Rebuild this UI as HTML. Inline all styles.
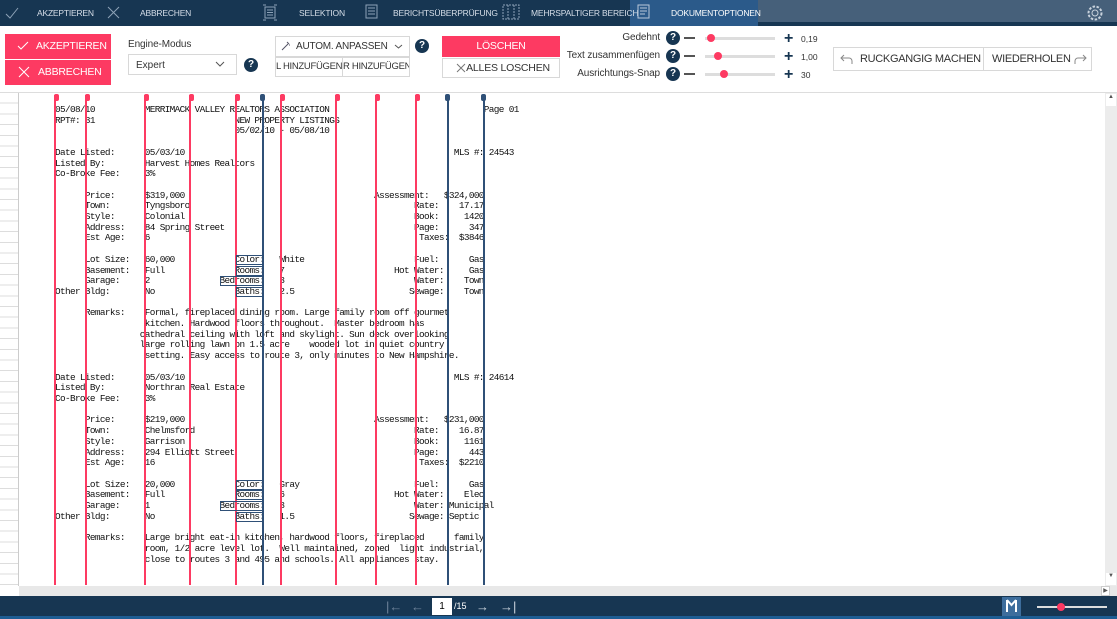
<!DOCTYPE html>
<html><head><meta charset="utf-8">
<style>
*{box-sizing:border-box;margin:0;padding:0}
body{width:1117px;height:619px;overflow:hidden;background:#fff;font-family:"Liberation Sans",sans-serif;position:relative}
div{white-space:nowrap}
.abs{position:absolute}
#top{left:0;top:0;width:1117px;height:26px;background:#173652}
.tt{position:absolute;top:0;height:26px;line-height:26px;color:#d6dee8;font-size:8.5px;letter-spacing:-0.2px}
.btn{position:absolute;font-size:10.5px;text-align:center;letter-spacing:-0.2px}
.pink{background:#fd3a62;color:#fff}
.outl{border:1px solid #d8d8d8;background:#fff;color:#333}
.q{position:absolute;width:14px;height:14px;border-radius:50%;background:#173652;color:#fff;font-size:10px;font-weight:bold;text-align:center;line-height:14px}
.lbl{position:absolute;font-size:10px;color:#333;text-align:right;letter-spacing:-0.1px}
.track{position:absolute;height:3px;background:#ddd;width:70px}
.dot{position:absolute;width:8px;height:8px;border-radius:50%;background:#fd3a62}
pre{position:absolute;left:55px;top:105px;font-family:"Liberation Mono",monospace;font-size:9.4px;letter-spacing:-0.64px;line-height:10.7px;color:#111}
.rl{position:absolute;top:95px;width:2px;height:490px;background:#fd3a62}
.bl{position:absolute;top:95px;width:2px;height:490px;background:#2f5077}
.mk{position:absolute;top:94px;width:5px;height:7px;border-radius:2px}
.bx{position:absolute;height:10px;border:1.5px solid #2f5077}
</style></head><body>
<div id="top" class="abs"></div>
<div class="abs" style="left:758px;top:0;width:359px;height:22px;background:#46607a"></div>
<div class="abs" style="left:630px;top:0;width:128px;height:26px;background:#2b5a8a"></div>
<svg class="abs" style="left:5px;top:6px" width="14" height="14"><path d="M1 8l4 4 8-10" stroke="#8ea3b8" fill="none" stroke-width="1"/></svg>
<div class="tt" style="left:37px">AKZEPTIEREN</div>
<svg class="abs" style="left:107px;top:6px" width="13" height="13"><path d="M1 1l11 11M12 1L1 12" stroke="#8ea3b8" stroke-width="1"/></svg>
<div class="tt" style="left:140px">ABBRECHEN</div>
<svg class="abs" style="left:262px;top:4px" width="16" height="17"><rect x="3" y="3" width="10" height="11" fill="none" stroke="#8ea3b8"/><path d="M5 6h6M5 8.5h6M5 11h6M1 1h3M12 1h3M1 16h3M12 16h3" stroke="#8ea3b8"/></svg>
<div class="tt" style="left:299px">SELEKTION</div>
<svg class="abs" style="left:365px;top:4px" width="16" height="17"><rect x="1" y="1" width="11" height="13" fill="none" stroke="#8ea3b8"/><path d="M3 4h7M3 7h7M3 10h7" stroke="#8ea3b8"/></svg>
<div class="tt" style="left:393px">BERICHTSÜBERPRÜFUNG</div>
<svg class="abs" style="left:502px;top:4px" width="18" height="17"><rect x="1" y="1" width="16" height="14" fill="none" stroke="#8ea3b8" stroke-dasharray="2 1"/><path d="M6 1v14M12 1v14" stroke="#8ea3b8" stroke-dasharray="2 1"/></svg>
<div class="tt" style="left:531px">MEHRSPALTIGER BEREICH</div>
<svg class="abs" style="left:637px;top:4px" width="16" height="17"><rect x="1" y="1" width="11" height="13" fill="none" stroke="#b8c8da"/><path d="M3 4h7M3 7h7M3 10h5" stroke="#b8c8da"/></svg>
<div class="tt" style="left:671px;color:#fff">DOKUMENTOPTIONEN</div>
<svg class="abs" style="left:1086px;top:4px" width="18" height="18"><circle cx="9" cy="9" r="3" fill="none" stroke="#c8d2dc"/><circle cx="9" cy="9" r="6.5" fill="none" stroke="#c8d2dc" stroke-dasharray="2.5 1.5" stroke-width="2"/></svg>

<div class="abs pink" style="left:5px;top:34px;width:106px;height:25px"></div>
<div class="abs" style="left:36px;top:34px;line-height:25px;font-size:10.5px;color:#fff;letter-spacing:-0.2px">AKZEPTIEREN</div>
<svg class="abs" style="left:17px;top:41px" width="12" height="10"><path d="M1 5l3 3 7-7" stroke="#fff" fill="none"/></svg>
<div class="abs pink" style="left:5px;top:60px;width:106px;height:25px"></div>
<div class="abs" style="left:38px;top:60px;line-height:25px;font-size:10.5px;color:#fff;letter-spacing:-0.2px">ABBRECHEN</div>
<svg class="abs" style="left:18px;top:66px" width="12" height="12"><path d="M1 1l10 10M11 1L1 11" stroke="#fff"/></svg>
<div class="lbl" style="left:128px;top:39px;text-align:left">Engine-Modus</div>
<div class="abs outl" style="left:128px;top:54px;width:109px;height:21px;font-size:10px;padding:5px 7px">Expert</div>
<svg class="abs" style="left:215px;top:61px" width="10" height="6"><path d="M1 1l4 4 4-4" stroke="#555" fill="none"/></svg>
<div class="q" style="left:244px;top:58px">?</div>
<div class="abs outl" style="left:275px;top:36px;width:135px;height:21px;font-size:10px;padding:4px 0 0 20px;letter-spacing:-0.2px">AUTOM. ANPASSEN</div>
<svg class="abs" style="left:281px;top:41px" width="10" height="10"><path d="M1 9l7-7M6 1l1 1M8 4l1 0" stroke="#556" /></svg>
<svg class="abs" style="left:394px;top:44px" width="9" height="5"><path d="M1 1l3.5 3 3.5-3" stroke="#555" fill="none"/></svg>
<div class="q" style="left:415px;top:39px">?</div>
<div class="abs outl" style="left:275px;top:57px;width:68px;height:20px;font-size:9.5px;line-height:18px;text-align:left;overflow:hidden;letter-spacing:-0.3px">L HINZUFÜGEN</div>
<div class="abs outl" style="left:342px;top:57px;width:68px;height:20px;font-size:9.5px;line-height:18px;text-align:left;overflow:hidden;letter-spacing:-0.3px">R HINZUFÜGEN</div>
<div class="btn pink" style="left:442px;top:36px;width:118px;height:21px;line-height:21px">LÖSCHEN</div>
<div class="btn outl" style="left:442px;top:58px;width:118px;height:20px;line-height:18px;padding-left:14px">ALLES LOSCHEN</div>
<svg class="abs" style="left:456px;top:63px" width="10" height="10"><path d="M1 1l8 8M9 1L1 9" stroke="#777"/></svg>

<div class="lbl" style="left:560px;top:32px;width:100px">Gedehnt</div>
<div class="lbl" style="left:540px;top:50px;width:120px">Text zusammenfügen</div>
<div class="lbl" style="left:540px;top:68px;width:120px">Ausrichtungs-Snap</div>
<div class="q" style="left:666px;top:31px">?</div>
<div class="q" style="left:666px;top:49px">?</div>
<div class="q" style="left:666px;top:67px">?</div>
<div class="abs" style="left:684px;top:37px;width:11px;height:1.5px;background:#555"></div>
<div class="abs" style="left:684px;top:55px;width:11px;height:1.5px;background:#555"></div>
<div class="abs" style="left:684px;top:73px;width:11px;height:1.5px;background:#555"></div>
<div class="track" style="left:705px;top:37px"></div><div class="dot" style="left:707px;top:34px"></div>
<div class="track" style="left:705px;top:55px"></div><div class="dot" style="left:714px;top:52px"></div>
<div class="track" style="left:705px;top:73px"></div><div class="dot" style="left:720px;top:70px"></div>
<div class="abs" style="left:784px;top:32px;font-size:16px;color:#173652;font-weight:bold;line-height:14px">+</div>
<div class="abs" style="left:784px;top:50px;font-size:16px;color:#173652;font-weight:bold;line-height:14px">+</div>
<div class="abs" style="left:784px;top:68px;font-size:16px;color:#173652;font-weight:bold;line-height:14px">+</div>
<div class="abs" style="left:801px;top:34px;font-size:8.5px;color:#333">0,19</div>
<div class="abs" style="left:801px;top:52px;font-size:8.5px;color:#333">1,00</div>
<div class="abs" style="left:801px;top:70px;font-size:8.5px;color:#333">30</div>
<div class="abs outl" style="left:833px;top:47px;width:151px;height:24px;font-size:11px;line-height:22px;padding-left:26px;letter-spacing:-0.3px">RUCKGANGIG MACHEN</div>
<div class="abs outl" style="left:983px;top:47px;width:109px;height:24px;font-size:11px;line-height:22px;padding-left:8px;letter-spacing:-0.3px">WIEDERHOLEN</div>
<svg class="abs" style="left:840px;top:53px" width="14" height="12"><path d="M4 2L1 5l3 3M1 5h8a3 3 0 0 1 3 3v3" stroke="#888" fill="none"/></svg>
<svg class="abs" style="left:1073px;top:53px" width="14" height="12"><path d="M10 2l3 3-3 3M13 5H5a3 3 0 0 0-3 3v3" stroke="#888" fill="none"/></svg>

<div class="abs" style="left:0;top:92px;width:1117px;height:1px;background:#ddd"></div>
<div class="abs" style="left:0;top:93px;width:18px;height:493px;background:repeating-linear-gradient(#fff 0,#fff 9.7px,#ddd 9.7px,#ddd 10.7px)"></div>
<div class="abs" style="left:18px;top:93px;width:1px;height:493px;background:#ccc"></div>
<div class="abs" style="left:1105px;top:93px;width:12px;height:493px;background:#ececec"></div>
<div class="abs" style="left:1106px;top:94px;width:10px;height:12px;background:#fff;font-size:6px;text-align:center;color:#555">▲</div>
<div class="abs" style="left:1106px;top:573px;width:10px;height:12px;background:#fff;font-size:6px;text-align:center;color:#555">▼</div>
<div class="abs" style="left:19px;top:586px;width:1098px;height:10px;background:#e8e8e8"></div>
<div class="abs" style="left:1101px;top:586px;width:9px;height:10px;background:#fff;border:1px solid #ccc;font-size:6px;text-align:center;color:#555">▶</div>

<pre id="doc"></pre>
<div id="lines"></div>

<div class="abs" style="left:0;top:596px;width:1117px;height:23px;background:#173652"></div>
<div class="abs" style="left:0;top:616px;width:1117px;height:3px;background:#1e5d93"></div>
<div class="abs" style="left:386px;top:599px;font-size:13px;color:#6d8299">|←</div>
<div class="abs" style="left:411px;top:599px;font-size:13px;color:#6d8299">←</div>
<div class="abs" style="left:432px;top:598px;width:20px;height:17px;background:#fff;font-size:10px;text-align:center;line-height:17px">1</div>
<div class="abs" style="left:454px;top:601px;font-size:9px;color:#fff">/15</div>
<div class="abs" style="left:476px;top:599px;font-size:13px;color:#c8d2dc">→</div>
<div class="abs" style="left:500px;top:599px;font-size:13px;color:#c8d2dc">→|</div>
<div class="abs" style="left:1002px;top:597px;width:19px;height:19px;background:#3d6d9c"></div>
<svg class="abs" style="left:1005px;top:599px" width="13" height="14"><path d="M2 1v12M11 1v12M2 1l4.5 5 4.5-5" stroke="#fff" stroke-width="2" fill="none"/></svg>
<div class="abs" style="left:1037px;top:606px;width:70px;height:2px;background:#ddd"></div>
<div class="dot" style="left:1057px;top:603px"></div>

<script>
function L(parts){var s="";for(var i=0;i<parts.length;i+=2){var c=parts[i];while(s.length<c)s+=" ";s+=parts[i+1];}return s;}
var rows=[
[0,"05/08/10",18,"MERRIMACK VALLEY REALTORS ASSOCIATION",86,"Page 01"],
[0,"RPT#: 31",36,"NEW PROPERTY LISTINGS"],
[36,"05/02/10 - 05/08/10"],[],
[0,"Date Listed:",18,"05/03/10",80,"MLS #: 24543"],
[0,"Listed By:",18,"Harvest Homes Realtors"],
[0,"Co-Broke Fee:",18,"3%"],[],
[6,"Price:",18,"$319,000",64,"Assessment:   $324,000"],
[6,"Town:",18,"Tyngsboro",72,"Rate:",81,"17.17"],
[6,"Style:",18,"Colonial",72,"Book:",82,"1420"],
[6,"Address:",18,"84 Spring Street",72,"Page:",83,"347"],
[6,"Est Age:",18,"6",73,"Taxes:",81,"$3846"],[],
[6,"Lot Size:",18,"60,000",36,"Color:",45,"White",72,"Fuel:",83,"Gas"],
[6,"Basement:",18,"Full",36,"Rooms:",45,"7",68,"Hot Water:",83,"Gas"],
[6,"Garage:",18,"2",33,"Bedrooms:",45,"3",72,"Water:",82,"Town"],
[0,"Other Bldg:",18,"No",36,"Baths:",45,"2.5",71,"Sewage:",82,"Town"],[],
[6,"Remarks:",18,"Formal, fireplaced dining room. Large family room off gourmet"],
[18,"kitchen. Hardwood floors throughout.  Master bedroom has"],
[17,"cathedral ceiling with loft and skylight. Sun deck overlooking"],
[17,"large rolling lawn on 1.5 acre    wooded lot in quiet country"],
[18,"setting. Easy access to route 3, only minutes to New Hampshire."],[],
[0,"Date Listed:",18,"05/03/10",80,"MLS #: 24614"],
[0,"Listed By:",18,"Northran Real Estate"],
[0,"Co-Broke Fee:",18,"3%"],[],
[6,"Price:",18,"$219,000",64,"Assessment:   $231,000"],
[6,"Town:",18,"Chelmsford",72,"Rate:",81,"16.87"],
[6,"Style:",18,"Garrison",72,"Book:",82,"1161"],
[6,"Address:",18,"294 Elliott Street",72,"Page:",83,"443"],
[6,"Est Age:",18,"16",73,"Taxes:",81,"$2210"],[],
[6,"Lot Size:",18,"20,000",36,"Color:",45,"Gray",72,"Fuel:",83,"Gas"],
[6,"Basement:",18,"Full",36,"Rooms:",45,"6",68,"Hot Water:",82,"Elec"],
[6,"Garage:",18,"1",33,"Bedrooms:",45,"3",72,"Water: Municipal"],
[0,"Other Bldg:",18,"No",36,"Baths:",45,"1.5",71,"Sewage: Septic"],[],
[6,"Remarks:",18,"Large bright eat-in kitchen, hardwood floors, fireplaced      family"],
[18,"room, 1/2 acre level lot.  Well maintained, zoned  light industrial,"],
[18,"close to routes 3 and 495 and schools. All appliances stay."]
];
document.getElementById("doc").textContent=rows.map(L).join("\n");
var h="";
[55,86,145,190,236,281,336,376,416].forEach(function(x){h+='<div class="rl" style="left:'+(x-1)+'px"></div><div class="mk" style="left:'+(x-1)+'px;background:#fd3a62"></div>';});
[263,448,484].forEach(function(x){h+='<div class="bl" style="left:'+(x-1)+'px"></div><div class="mk" style="left:'+(x-3)+'px;background:#2f5077"></div>';});
[[14,236,28],[15,236,28],[16,220,44],[17,236,28],[35,236,28],[36,236,28],[37,220,44],[38,236,28]].forEach(function(b){var y=110+10.7*b[0]-5;h+='<div class="bx" style="left:'+b[1]+'px;top:'+y+'px;width:'+b[2]+'px"></div>';});
document.getElementById("lines").innerHTML=h;
</script>
</body></html>
